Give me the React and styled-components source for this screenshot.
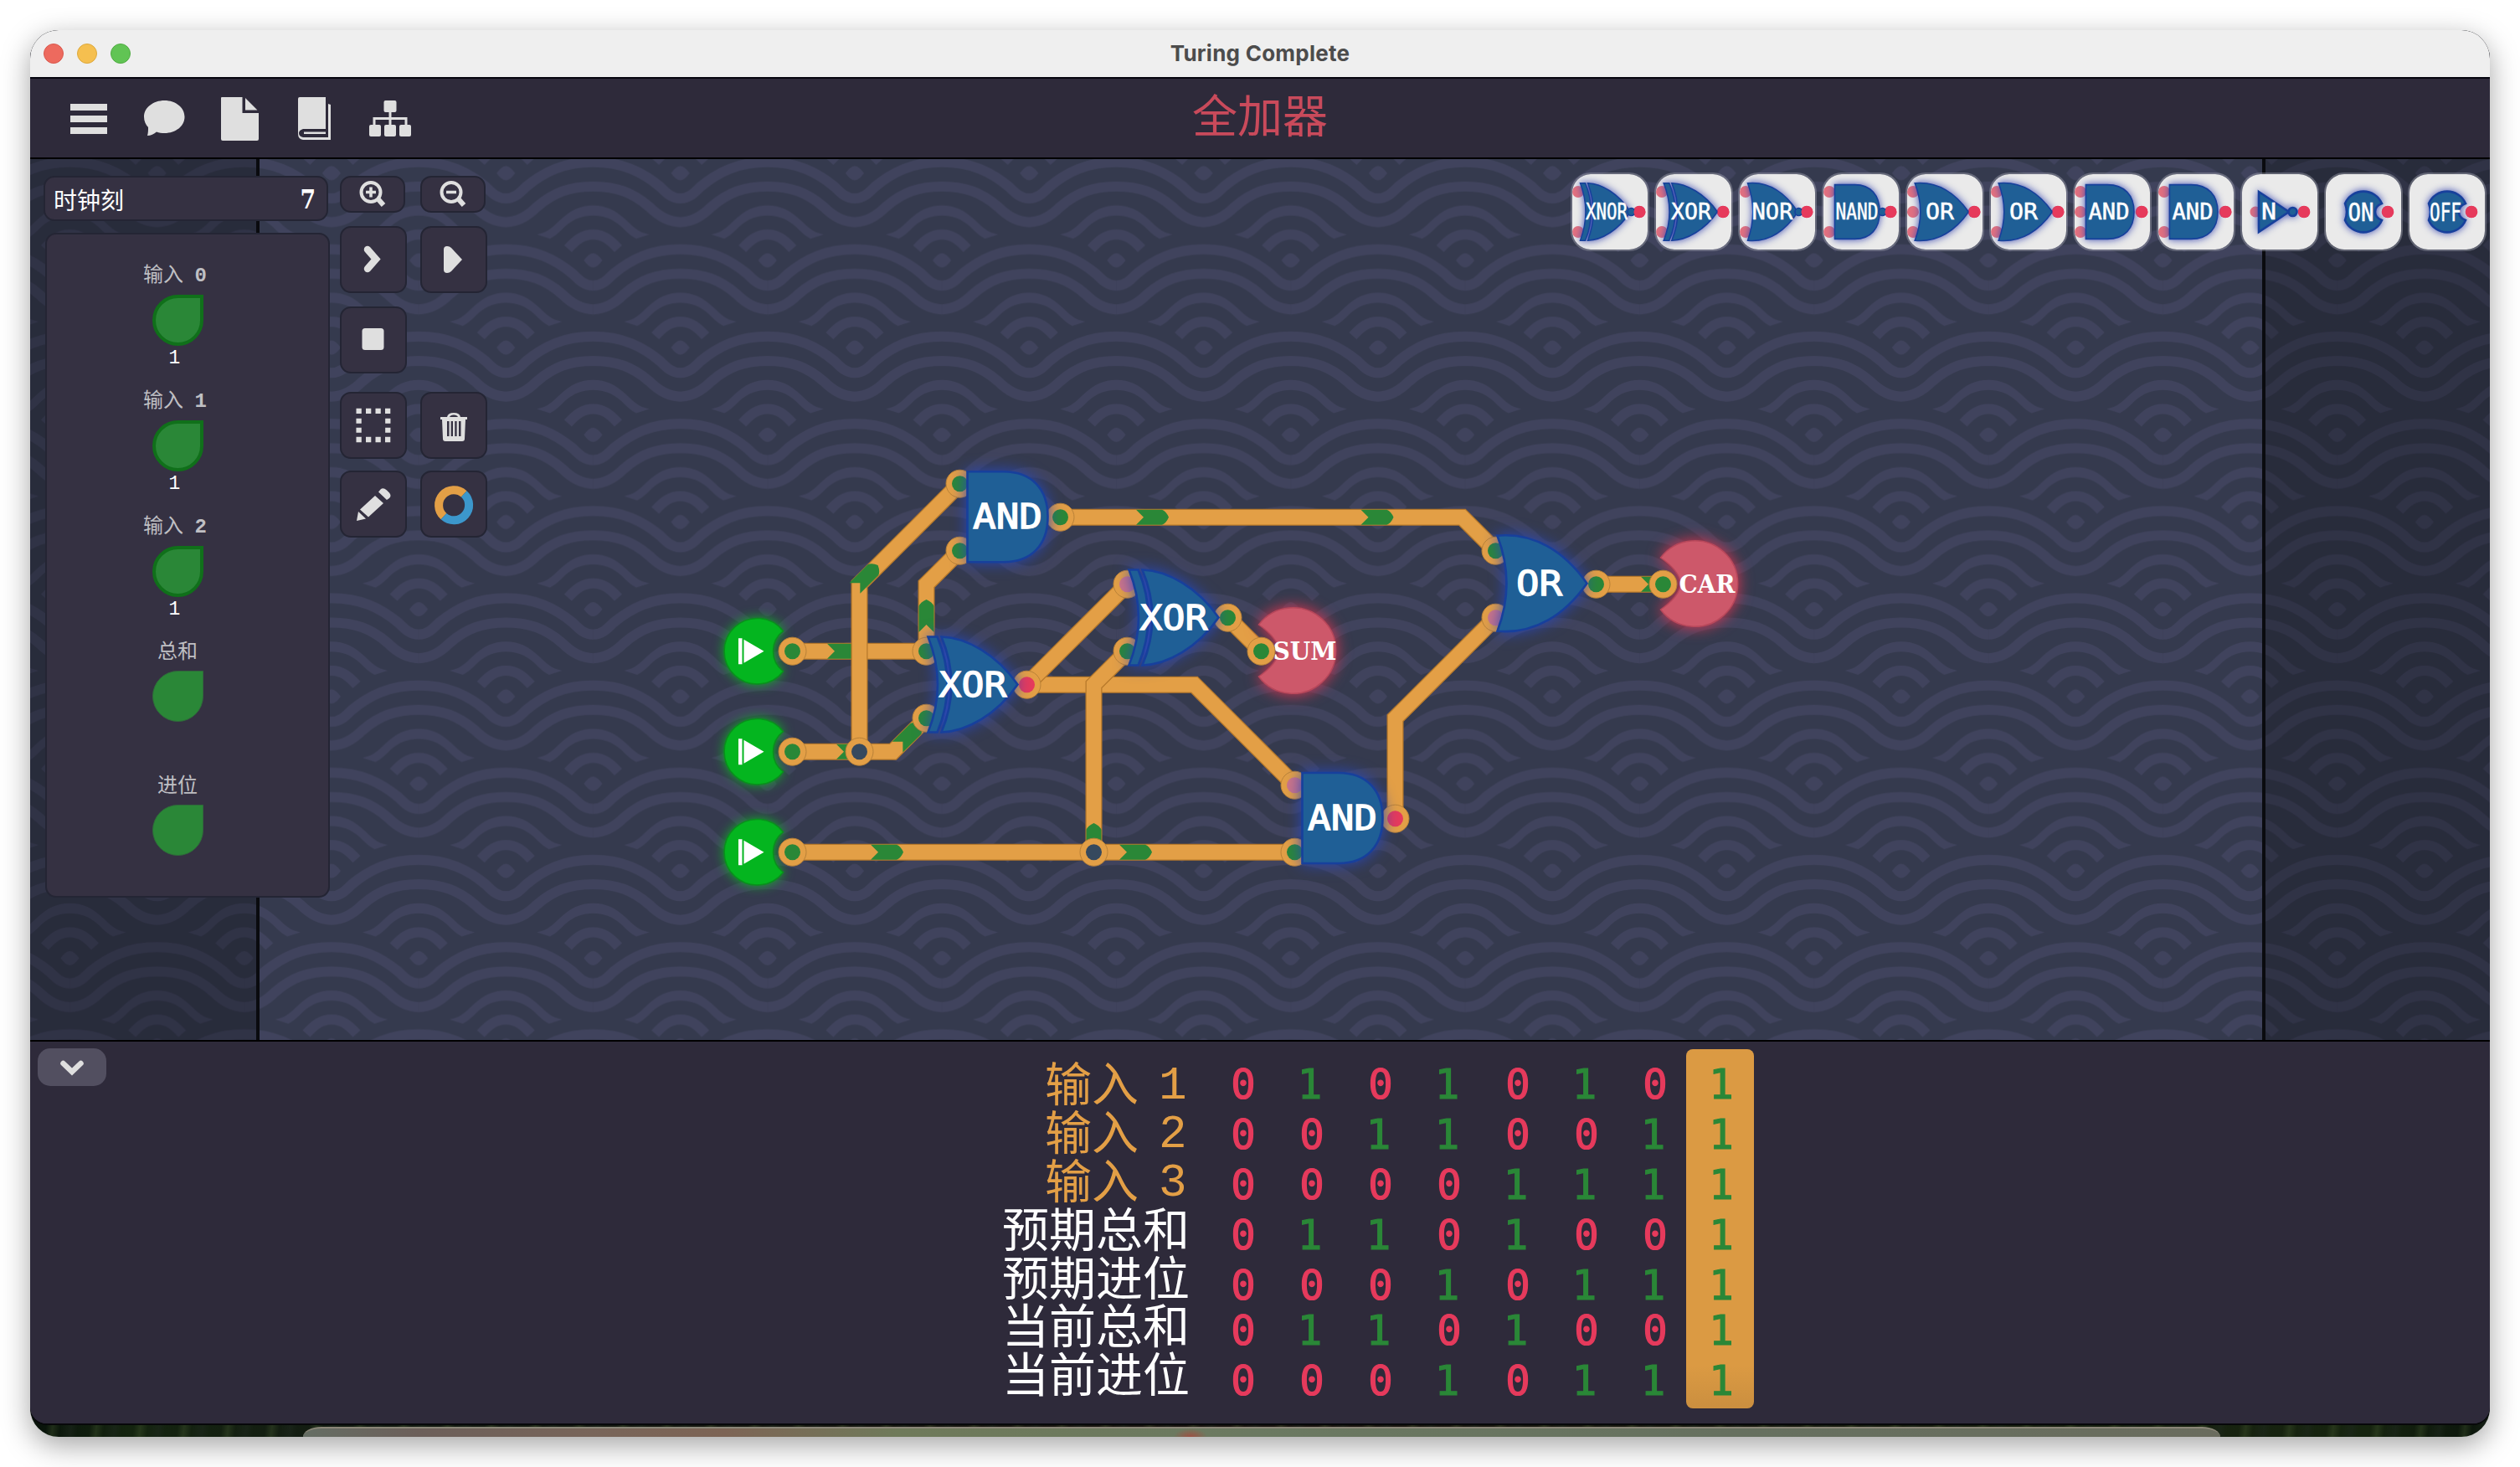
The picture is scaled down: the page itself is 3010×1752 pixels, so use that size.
import React from "react";
import styled, { createGlobalStyle, css } from "styled-components";

const CJK = `"Noto Sans CJK SC", sans-serif`;
const MONO = `"Liberation Mono", "Noto Sans CJK SC", monospace`;

const GlobalStyle = createGlobalStyle`
  * { box-sizing: border-box; }
  body { margin: 0; background: #ffffff; font-family: ${CJK}; }
  svg { display: block; }
`;

/* ---------- window ---------- */

const Page = styled.main`
  width: 3010px;
  height: 1752px;
  padding: 36px;
  overflow: hidden;
  background: #ffffff;
`;

const Screen = styled.div`
  display: flex;
  flex-direction: column;
  width: 2938px;
  height: 1680px;
  border-radius: 34px;
  overflow: hidden;
  background:
    repeating-linear-gradient(97deg, transparent 0 14px, rgba(70, 90, 50, 0.35) 22px, transparent 31px, rgba(30, 40, 30, 0.5) 44px, transparent 52px),
    linear-gradient(90deg, #08120a, #14240f 4%, #131c12 12%, #1b1410 50%, #16240f 95%, #0a140b);
`;

const Shadow = styled.div`
  border-radius: 34px;
  width: 2938px;
  box-shadow: 0 10px 34px rgba(0, 0, 0, 0.36);
`;

const GameWindow = styled.section`
  display: flex;
  flex-direction: column;
  height: 1664px;
  border-radius: 0 0 20px 20px;
  overflow: hidden;
  background: #2e2a3a;
  box-shadow: 0 2px 0 #07080a;
`;

const TitleBar = styled.header`
  display: grid;
  grid-template-columns: 1fr auto 1fr;
  align-items: center;
  height: 56px;
  padding: 0 16px;
  background: #efefef;
`;

const Lights = styled.div`
  display: flex;
  gap: 16px;
`;

const Light = styled.span`
  width: 24px;
  height: 24px;
  border-radius: 50%;
  background: ${(p) => p.$fill};
  border: 1px solid ${(p) => p.$edge};
`;

const WindowTitle = styled.h1`
  margin: 0;
  font: 700 26px/56px Inter, sans-serif;
  letter-spacing: 0.25px;
  color: #4c4c4c;
`;

const Menu = styled.nav`
  display: grid;
  grid-template-columns: 1fr auto 1fr;
  align-items: start;
  height: 98px;
  border-top: 2px solid #06060f;
  border-bottom: 2px solid #000000;
  background: #2e2a3a;
`;

const MenuIcons = styled.div`
  display: flex;
  padding: 20px 0 0 40px;
  gap: 30px;
  svg { width: 60px; height: 56px; fill: #dfdfdf; }
`;

const LevelTitle = styled.h2`
  margin: 0;
  font: 400 54px/84px ${CJK};
  color: #c94a5b;
`;

/* ---------- board ---------- */

const Board = styled.section`
  display: grid;
  height: 1052px;
  > * { grid-area: 1 / 1; }
`;

const Overlay = styled.div`
  display: flex;
  align-items: flex-start;
  padding: 16px 4px 0 16px;
`;

const SideColumn = styled.div`
  display: flex;
  flex-direction: column;
  width: 342px;
  padding-top: 4px;
`;

const panel = css`
  background: #353142;
  border: 2px solid #242534;
  border-radius: 13px;
`;

const TickBox = styled.div`
  ${panel}
  display: flex;
  align-items: center;
  justify-content: space-between;
  width: 340px;
  height: 54px;
  padding: 2px 12px 0 10px;
  color: #ffffff;
  font: 400 28px/48px ${CJK};
`;

const TickValue = styled.b`
  font: 700 31px/48px "DejaVu Serif", serif;
  transform: translateX(1px) scaleX(0.86);
`;

const StatePanel = styled.div`
  ${panel}
  display: flex;
  flex-direction: column;
  width: 340px;
  height: 794px;
  margin: 14px 0 0 2px;
  padding-top: 30px;
`;

const Signal = styled.div`
  display: flex;
  flex-direction: column;
  align-items: center;
  width: 312px;
  height: ${(p) => p.$height || 150}px;
`;

const SignalName = styled.span`
  height: ${(p) => (p.$numbered ? 42 : 41)}px;
  font: 400 24px/32px ${CJK};
  color: #bfbfc3;
  white-space: pre;
  transform: translateX(${(p) => (p.$numbered ? -3 : 0)}px);
  b { margin-left: 8px; font: 700 24px/32px ${MONO}; }
`;

const Leaf = styled.span`
  flex: none;
  width: 61px;
  height: 61px;
  border-radius: 50% 0 50% 50%;
  background: #2a8737;
  border: ${(p) => (p.$ringed ? "4px solid #10701a" : "1px solid #2f6a3a")};
`;

const SignalValue = styled.span`
  font: 400 23px/26px ${MONO};
  padding-right: 7px;
  padding-top: 2px;
  color: #ffffff;
`;

const ToolGrid = styled.div`
  display: grid;
  grid-template-columns: 80px 80px;
  column-gap: 16px;
  grid-template-rows: 60px 96px 102px 94px 80px;
  padding-top: 4px;
  margin-left: 12px;
`;

const ToolButton = styled.button`
  ${panel}
  display: flex;
  align-items: center;
  justify-content: center;
  width: ${(p) => (p.$short ? 78 : 80)}px;
  height: ${(p) => (p.$short ? 44 : 80)}px;
  padding: 0;
  svg { width: 60px; height: 60px; flex: none; }
`;

const PartsBar = styled.div`
  display: flex;
  gap: 6px;
  margin-left: auto;
`;

const PartTile = styled.button`
  width: 94px;
  height: 94px;
  padding: 0;
  border: 2px solid rgba(160, 162, 175, 0.45);
  border-radius: 24px;
  background: #eaeaea;
  background-clip: padding-box;
  overflow: hidden;
`;

/* ---------- truth table ---------- */

const TablePanel = styled.section`
  display: grid;
  grid-template-columns: 1385px 1fr;
  height: 458px;
  border-top: 2px solid #000000;
  background: #2e2a3a;
`;

const LabelArea = styled.div`
  display: flex;
  justify-content: space-between;
  align-items: flex-start;
  padding: 8px 0 0 9px;
`;

const CollapseButton = styled.button`
  display: flex;
  align-items: center;
  justify-content: center;
  width: 82px;
  height: 45px;
  padding: 0;
  border: 0;
  border-radius: 15px;
  background: #524f60;
`;

const Labels = styled.div`
  display: flex;
  flex-direction: column;
  align-items: flex-end;
  padding-top: 10px;
`;

const RowLabel = styled.span`
  display: flex;
  font: 400 56px/57.9px ${CJK};
  height: 57.9px;
  color: ${(p) => (p.$input ? "#e39f46" : "#ffffff")};
  white-space: pre;
`;

const RowIndex = styled.span`
  width: 61px;
  padding-left: 24px;
  margin-top: 7px;
  font: 400 56px/57px ${MONO};
`;

const Columns = styled.div`
  display: flex;
  padding: 9px 0 0 19px;
`;

const Column = styled.div`
  display: flex;
  flex-direction: column;
  align-items: center;
  width: ${(p) => (p.$current ? 81 : 82)}px;
  height: 429px;
  padding: 13px 0 0 8px;
  border-radius: 8px;
  background: ${(p) => (p.$current ? "linear-gradient(#db9a43 88%, #cb8f3f)" : "transparent")};
`;

const Bit = styled.span`
  height: 60px;
  font: 400 49px/60px "DejaVu Sans Mono", monospace;
  -webkit-text-stroke: 1.2px currentColor;
  color: ${(p) => (p.$on ? "#2a8737" : "#e63a5c")};
  padding-right: ${(p) => (p.$on ? 5 : 0)}px;
  &:nth-child(n + 6) { transform: translateY(-6px); }
`;

const Dock = styled.div`
  width: 2290px;
  height: 12px;
  margin: 4px 0 0 326px;
  border-radius: 22px 22px 0 0 / 12px 12px 0 0;
  border-top: 2px solid #8b8678;
  background:
    radial-gradient(20px 10px at 1060px 10px, rgba(170, 70, 60, 0.8), transparent),
    linear-gradient(90deg, #656e64, #6c5f5a 6%, #78655a 15%, #7d6455 22%, #6f7a5a 31%, #6b7961 50%, #66705f 75%, #6a6c5e);
`;

/* ---------- drawings ---------- */

const GateFace = styled.g`
  fill: #1f5f96;
  stroke: #17409c;
  stroke-width: 2.6;
  filter: drop-shadow(0 0 ${(p) => p.$glow || 9}px ${(p) => p.$tone || "#2847b8"});
`;

const GateText = styled.text`
  font: 400 ${(p) => p.$size || 41}px "DejaVu Sans Mono", monospace;
  fill: #ffffff;
  stroke: #ffffff;
  stroke-width: ${(p) => (p.$size ? 0.5 : 1.3)};
  text-anchor: middle;
`;

const OutputText = styled.text`
  font: 700 29px "DejaVu Serif", serif;
  fill: #ffffff;
`;

const AND_BODY = "M-51,-54 H-8 C26,-54 45,-33 45,0 C45,33 26,54 -8,54 H-51 Z";
const OR_BODY = "M-58,-57 C-14,-61 22,-38 49,0 C22,38 -14,61 -58,57 Q-36,0 -58,-57 Z";
const XOR_BODY = "M-42,-57 C-12,-56 24,-36 49,0 C24,36 -12,56 -42,57 Q-18,0 -42,-57 Z";
const XOR_BAR = "M-58,-57 H-47 Q-23,0 -47,57 H-58 Q-35,0 -58,-57 Z";

function GateShape({ kind, glow, tone }) {
  return (
    <GateFace $glow={glow} $tone={tone}>
      {kind === "AND" && <path d={AND_BODY} />}
      {kind === "OR" && <path d={OR_BODY} />}
      {kind === "XOR" && (
        <>
          <path d={XOR_BAR} />
          <path d={XOR_BODY} />
        </>
      )}
    </GateFace>
  );
}

function Gate({ kind, x, y, textX = 0, width }) {
  return (
    <g transform={`translate(${x} ${y})`}>
      <GateShape kind={kind} />
      <GateText x={textX} y={14} textLength={width} lengthAdjust="spacingAndGlyphs">
        {kind}
      </GateText>
    </g>
  );
}

const PIN_FILL = { on: "#2a8737", off: "#e63a5c", soft: "#cc7488", node: "#36495e" };

function Pin({ x, y, state = "on" }) {
  return (
    <g>
      <circle cx={x} cy={y} r="16.5" fill="#e39f46" stroke="#b98238" strokeWidth="1" />
      <circle cx={x} cy={y} r="9.5" fill={PIN_FILL[state]} />
    </g>
  );
}

function Wire({ d }) {
  return (
    <g fill="none" strokeMiterlimit="6">
      <path d={d} stroke="#b87a2b" strokeWidth="20" />
      <path d={d} stroke="#e39f46" strokeWidth="17.4" />
    </g>
  );
}

function Pulse({ x, y, turn = 0 }) {
  return (
    <path
      transform={`translate(${x} ${y}) rotate(${turn})`}
      d="M0,-9 H31 Q36,-7 39,0 Q36,7 31,9 H0 L9,0 Z"
      fill="#2a8737"
    />
  );
}

const InputDisc = styled.path`
  fill: #04b51f;
  stroke: #0a8f1d;
  stroke-width: 1.5;
  filter: drop-shadow(0 0 7px #0fae28);
`;

const OutputDisc = styled.path`
  fill: #cd586a;
  stroke: #b8485b;
  stroke-width: 1.5;
  filter: drop-shadow(0 0 9px #e03550);
`;

function InputNode({ y }) {
  return (
    <g transform={`translate(904 ${y})`}>
      <InputDisc d="M31.5,-24 A39.3,39.3 0 1 0 31.5,24 A30,30 0 0 1 31.5,-24 Z" />
      <path d="M-22,-15.5 h4.5 v31 h-4.5 Z M-15.5,-14 L8.5,0 L-15.5,14 Z" fill="#ffffff" />
    </g>
  );
}

function OutputNode({ x, y, name }) {
  return (
    <g transform={`translate(${x} ${y})`}>
      <OutputDisc d="M-41,-31 A51.3,51.3 0 1 1 -41,31 Q-18,15 -17,0 Q-18,-15 -41,-31 Z" />
      <OutputText x={name === "SUM" ? -24 : -19} y={10.7} textLength={name === "SUM" ? 76 : 67} lengthAdjust="spacingAndGlyphs">
        {name}
      </OutputText>
    </g>
  );
}

function WaveTile({ x, y }) {
  return (
    <g transform={`translate(${x} ${y})`}>
      <path d="M-104.17,-74 C-94,-74 -88,-80 -80,-88 C-58,-106 -35,-117.3 0,-117.3 C35,-117.3 58,-106 80,-88 C88,-80 94,-74 104.17,-74" />
      <path d="M-104.17,-45.7 C-90,-45.7 -79,-52 -67,-64 C-47,-81 -28,-88.3 0,-88.3 C28,-88.3 47,-81 67,-64 C79,-52 90,-45.7 104.17,-45.7" />
      <path
        d="M-67,-31 C-54,-33 -48,-40 -40,-47.5 C-27,-60 -15,-65.5 0,-65.5 C15,-65.5 27,-60 40,-47.5 C48,-40 54,-33 67,-31 L51.5,-26 C46,-28 40,-34 34,-40 C23,-50 12,-53.5 0,-53.5 C-12,-53.5 -23,-50 -34,-40 C-40,-34 -46,-28 -51.5,-26 Z"
        fill="#40435d"
        stroke="none"
      />
      <path d="M-30,-14 C-20,-25 -12,-31 0,-31 C12,-31 20,-25 30,-14" />
      <path d="M-11,0 Q-5,-8.5 0,-8.5 Q5,-8.5 11,0 Q5,8.5 0,8.5 Q-5,8.5 -11,0 Z" fill="#40435d" stroke="none" />
    </g>
  );
}

const T = 208.33;

function Circuit() {
  return (
    <svg width="2938" height="1052" viewBox="36 190 2938 1052">
      <defs>
        <pattern id="waves" x="812.6" y="206.8" width={T} height={T} patternUnits="userSpaceOnUse">
          <rect width={T} height={T} fill="#353a4e" />
          <g fill="none" stroke="#40435d" strokeWidth="12">
            {[-1, 0, 1, 2].map((i) =>
              [-1, 0, 1, 2].map((j) => (
                <React.Fragment key={`${i}${j}`}>
                  <WaveTile x={i * T} y={j * T} />
                  <WaveTile x={i * T + T / 2} y={j * T - T / 2} />
                </React.Fragment>
              ))
            )}
          </g>
        </pattern>
      </defs>
      <rect x="36" y="190" width="2938" height="1052" fill="url(#waves)" />
      <rect x="36" y="190" width="270" height="1052" fill="#000000" opacity="0.24" />
      <rect x="2705" y="190" width="269" height="1052" fill="#000000" opacity="0.24" />
      <rect x="306" y="190" width="4" height="1052" fill="#0a0b0f" />
      <rect x="2702" y="190" width="4" height="1052" fill="#0a0b0f" />

      <Wire d="M946.5,777.7 H1106.5" />
      <Pulse x={988} y={777.7} />
      <Wire d="M1106.5,777.7 V697.7 L1146.5,657.7" />
      <Pulse x={1106.5} y={755} turn={-90} />
      <Wire d="M946.5,897.7 H1066.5 L1106.5,857.7" />
      <Pulse x={999} y={897.7} />
      <Pulse x={1072} y={892.2} turn={-45} />
      <Wire d="M1026.5,897.7 V697.7 L1146.5,577.7" />
      <Pulse x={1021} y={702.5} turn={-45} />
      <Wire d="M1266.5,617.7 H1746.5 L1786.5,657.7" />
      <Pulse x={1357} y={617.7} />
      <Pulse x={1625.5} y={617.7} />
      <Wire d="M1226.5,817.7 H1426.5 L1546.5,937.7" />
      <Wire d="M1226.5,817.7 L1346.5,697.7" />
      <Wire d="M946.5,1017.7 H1546.5" />
      <Pulse x={1040} y={1017.7} />
      <Pulse x={1337} y={1017.7} />
      <Wire d="M1306.5,1017.7 V817.7 L1346.5,777.7" />
      <Pulse x={1306.5} y={1022} turn={-90} />
      <Wire d="M1666.5,977.7 V857.7 L1786.5,737.7" />
      <Wire d="M1466.5,737.7 L1506.5,777.7" />
      <Wire d="M1906.5,697.7 H1986.5" />
      <Pulse x={1960} y={697.7} />

      <InputNode y={777.7} />
      <InputNode y={897.7} />
      <InputNode y={1017.7} />
      <Pin x={946.5} y={777.7} />
      <Pin x={946.5} y={897.7} />
      <Pin x={946.5} y={1017.7} />
      <Pin x={1026.5} y={897.7} state="node" />
      <Pin x={1306.5} y={1017.7} state="node" />
      <Pin x={1146.5} y={577.7} />
      <Pin x={1146.5} y={657.7} />
      <Pin x={1266.5} y={617.7} />
      <Pin x={1106.5} y={777.7} />
      <Pin x={1106.5} y={857.7} />
      <Pin x={1226.5} y={817.7} state="off" />
      <Pin x={1346.5} y={697.7} state="soft" />
      <Pin x={1346.5} y={777.7} />
      <Pin x={1466.5} y={737.7} />
      <Pin x={1546.5} y={937.7} state="soft" />
      <Pin x={1546.5} y={1017.7} />
      <Pin x={1666.5} y={977.7} state="off" />
      <Pin x={1786.5} y={657.7} />
      <Pin x={1786.5} y={737.7} state="soft" />
      <Pin x={1906.5} y={697.7} />

      <Gate kind="AND" x={1206.5} y={617.2} textX={-3} width={83} />
      <Gate kind="XOR" x={1166.5} y={817.5} textX={-4.5} width={81} />
      <Gate kind="XOR" x={1406.5} y={737.5} textX={-4.5} width={81} />
      <Gate kind="AND" x={1606.5} y={977} textX={-3} width={83} />
      <Gate kind="OR" x={1846.5} y={696.7} textX={-8} width={55} />
      <OutputNode x={1544.5} y={777} name="SUM" />
      <OutputNode x={2024.5} y={697} name="CAR" />
      <Pin x={1506.5} y={777.7} />
      <Pin x={1986.5} y={697.7} />
    </svg>
  );
}

const PARTS = [
  { label: "XNOR", kind: "XOR", pins: 2, negated: true, width: 50, tx: -4 },
  { label: "XOR", kind: "XOR", pins: 2, width: 48, tx: -3 },
  { label: "NOR", kind: "OR", pins: 2, negated: true, width: 49, tx: -6 },
  { label: "NAND", kind: "AND", pins: 2, negated: true, width: 51, tx: -5 },
  { label: "OR", kind: "OR", pins: 3, width: 34, tx: -6 },
  { label: "OR", kind: "OR", pins: 2, width: 34, tx: -6 },
  { label: "AND", kind: "AND", pins: 3, width: 49, tx: -4 },
  { label: "AND", kind: "AND", pins: 2, width: 49, tx: -4 },
  { label: "N", kind: "NOT", width: 18, tx: -13 },
  { label: "ON", kind: "CONST", width: 31, tx: -3 },
  { label: "OFF", kind: "CONST", width: 38, tx: -2 },
];

function Part({ part }) {
  const { label, kind, pins, negated, width, tx } = part;
  const rows = pins === 3 ? [-24, 0, 24] : [-24, 24];
  return (
    <PartTile>
      <svg width="90" height="90" viewBox="-45 -45 90 90">
        {pins && rows.map((r) => <circle key={r} cx="-38" cy={r} r="7" fill="#e2707f" />)}
        {kind === "NOT" && <circle cx="-29" cy="0" r="6.5" fill="#e2707f" />}
        <circle cx={pins ? 35 : 29} cy="0" r="7.3" fill="#e63a5c" />
        {pins && (
          <g transform={`translate(${negated ? -3 : -1} 0) scale(${negated ? 0.56 : 0.6} 0.6)`}>
            <GateShape kind={kind} glow={8} tone="#3c4ab0" />
          </g>
        )}
        {negated && <circle cx="25.5" cy="0" r="4.5" fill="#1f5f96" stroke="#17409c" strokeWidth="1.6" />}
        {kind === "NOT" && (
          <GateFace $glow={5} $tone="#3c4ab0" strokeWidth="1.6">
            <path d="M-25,-24 L11,0 L-25,24 Z" />
            <circle cx="15.5" cy="0" r="5" />
          </GateFace>
        )}
        {kind === "CONST" && (
          <GateFace $glow={5} $tone="#3c4ab0">
            <path d="M-22,-10 A24,24 0 0 1 22,-10 Q14,-7 14,0 Q14,7 22,10 A24,24 0 0 1 -22,10 Q-18,0 -22,-10 Z" />
          </GateFace>
        )}
        <circle cx={pins ? 35.5 : 29} cy="0" r="7" fill="#e63a5c" />
        <GateText $size={kind === "CONST" ? 30 : 27} x={tx} y={kind === "CONST" ? 11 : 9} textLength={width} lengthAdjust="spacingAndGlyphs">
          {label}
        </GateText>
      </svg>
    </PartTile>
  );
}

const MagnifierIcon = ({ plus }) => (
  <svg viewBox="0 0 60 60" fill="none" stroke="#dfdfdf" strokeWidth="4">
    <circle cx="28" cy="27.5" r="11.5" />
    <path d="M36,35 L43,43" strokeWidth="6" />
    <path d={plus ? "M22,27.5 H34 M28,21.5 V33.5" : "M22,27.5 H34"} strokeWidth="3.6" />
  </svg>
);

const WideCell = styled.div`
  grid-column: 1 / span 2;
`;

const SIGNALS = [
  { name: "输入 ", index: "0", value: "1" },
  { name: "输入 ", index: "1", value: "1" },
  { name: "输入 ", index: "2", value: "1" },
  { name: "总和", height: 160 },
  { name: "进位" },
];

const ROWS = [
  { label: "输入", index: "1", bits: "01010101" },
  { label: "输入", index: "2", bits: "00110011" },
  { label: "输入", index: "3", bits: "00001111" },
  { label: "预期总和", bits: "01101001" },
  { label: "预期进位", bits: "00010111" },
  { label: "当前总和", bits: "01101001" },
  { label: "当前进位", bits: "00010111" },
];

export default function App() {
  return (
    <Page>
      <GlobalStyle />
      <Shadow>
        <Screen>
          <GameWindow>
            <TitleBar>
              <Lights>
                <Light $fill="#ed6a5e" $edge="#d9584d" />
                <Light $fill="#f5bf4f" $edge="#dca83c" />
                <Light $fill="#61c454" $edge="#50ac43" />
              </Lights>
              <WindowTitle>Turing Complete</WindowTitle>
            </TitleBar>

            <Menu>
              <MenuIcons>
                <svg viewBox="0 0 60 56">
                  <path d="M8,10 h44 v8 h-44 Z M8,24 h44 v8 h-44 Z M8,38 h44 v8 h-44 Z" />
                </svg>
                <svg viewBox="0 0 60 56">
                  <path d="M30.5,6 C44,6 54.5,14.5 54.5,25.5 C54.5,36.5 44,45 30.5,45 C27,45 24,44.5 21,43.5 C18,46 14,48 10,48 C11,45 11,41 11,38 C8,35 6,30.5 6,25.5 C6,14.5 17,6 30.5,6 Z" />
                </svg>
                <svg viewBox="0 0 60 56">
                  <path d="M10,2 h25 v19 h19.5 v31 a2,2 0 0 1 -2,2 h-41 a2,2 0 0 1 -2,-2 v-49 Z M38.5,3 L53,17.5 H38.5 Z" transform="translate(-1.5 0)" />
                </svg>
                <svg viewBox="0 0 60 56">
                  <path d="M12,4 q0,-2 2,-2 h31 v38 h-27 q-5,1.5 -5,5 q0,4 5,5 h30 v-40 l3,1 v42 h-33 q-6,-1 -6,-7 Z M19,43.5 h26 v2.5 h-26 Z" transform="translate(-2 0)" />
                </svg>
                <svg viewBox="0 0 60 56">
                  <rect x="22.5" y="6" width="15" height="14" rx="2" />
                  <path d="M28.5,18 h3 v8 h19 v10 h-3 v-7 h-16 v7 h-3 v-7 h-16 v7 h-3 v-10 h19 Z" />
                  <rect x="5" y="35" width="14" height="14" rx="2" />
                  <rect x="23" y="35" width="14" height="14" rx="2" />
                  <rect x="41" y="35" width="14" height="14" rx="2" />
                </svg>
              </MenuIcons>
              <LevelTitle>全加器</LevelTitle>
            </Menu>

            <Board>
              <Circuit />
              <Overlay>
                <SideColumn>
                  <TickBox>
                    时钟刻<TickValue>7</TickValue>
                  </TickBox>
                  <StatePanel>
                    {SIGNALS.map((s, i) => (
                      <Signal key={i} $height={s.height}>
                        <SignalName $numbered={!!s.index}>
                          {s.name}
                          {s.index && <b>{s.index}</b>}
                        </SignalName>
                        <Leaf $ringed={!!s.value} />
                        {s.value && <SignalValue>{s.value}</SignalValue>}
                      </Signal>
                    ))}
                  </StatePanel>
                </SideColumn>

                <ToolGrid>
                  <ToolButton $short><MagnifierIcon plus /></ToolButton>
                  <ToolButton $short><MagnifierIcon /></ToolButton>
                  <ToolButton>
                    <svg viewBox="0 0 60 60" fill="none" stroke="#dfdfdf" strokeWidth="8.5" strokeLinecap="round">
                      <path d="M22,18 L32,29.5 L22,41" transform="translate(1 0)" />
                    </svg>
                  </ToolButton>
                  <ToolButton>
                    <svg viewBox="0 0 60 60" fill="#dfdfdf">
                      <path d="M18,18 Q18,14 22,14 Q25,14 27,16 L40,30 L27,44 Q25,46 22,46 Q18,46 18,42 Z" />
                    </svg>
                  </ToolButton>
                  <WideCell>
                    <ToolButton>
                      <svg viewBox="0 0 60 60" fill="#dfdfdf">
                        <rect x="16.5" y="16" width="26" height="26" rx="3.5" />
                      </svg>
                    </ToolButton>
                  </WideCell>
                  <ToolButton>
                    <svg viewBox="0 0 60 60" fill="none" stroke="#dfdfdf" strokeWidth="6.3">
                      <path d="M9.5,12.8 h41 M9.5,47 h41" strokeDasharray="6.3 5.2" />
                      <path d="M12.6,21.7 v19 M47.3,21.7 v19" strokeDasharray="6 5" />
                    </svg>
                  </ToolButton>
                  <ToolButton>
                    <svg viewBox="0 0 60 60" fill="#dfdfdf">
                      <path d="M14,20 h8 q1,-5 8,-5 q7,0 8,5 h8 v3 h-2 l-1,23 q0,3 -3,3 h-20 q-3,0 -3,-3 l-1,-23 h-2 Z" />
                      <path d="M25,20 q1,-2.5 5,-2.5 q4,0 5,2.5 Z M22,25 h2.5 v18 h-2.5 Z M26.7,25 h2.3 v18 h-2.3 Z M31.3,25 h2.3 v18 h-2.3 Z M36,25 h2.5 v18 h-2.5 Z" fill="#353142" />
                    </svg>
                  </ToolButton>
                  <ToolButton>
                    <svg viewBox="0 0 60 60" fill="#dfdfdf">
                      <path d="M10,50 L12,39 L21,47.5 Z M14,36.5 L32,20 L42,29 L24,45.5 Z M36,15.5 L39,12 Q42,10 46,13.5 L49,16.5 Q52,20 49,23 L46,25 Z" />
                    </svg>
                  </ToolButton>
                  <ToolButton>
                    <svg viewBox="0 0 60 60" fill="none" strokeWidth="10">
                      <path d="M18,44.6 A18,18 0 0 1 42.2,17.9" stroke="#e39f46" />
                      <path d="M42.2,17.9 A18,18 0 0 1 18,44.6" stroke="#3c97cc" />
                    </svg>
                  </ToolButton>
                </ToolGrid>

                <PartsBar>
                  {PARTS.map((part, i) => (
                    <Part key={i} part={part} />
                  ))}
                </PartsBar>
              </Overlay>
            </Board>

            <TablePanel>
              <LabelArea>
                <CollapseButton>
                  <svg width="40" height="30" viewBox="0 0 40 30" fill="none" stroke="#dfdfdf" strokeWidth="6.5" strokeLinecap="round">
                    <path d="M9.5,10 L20,20 L30.5,10" />
                  </svg>
                </CollapseButton>
                <Labels>
                  {ROWS.map((row, i) => (
                    <RowLabel key={i} $input={!!row.index}>
                      {row.label}
                      {row.index && <RowIndex>{row.index}</RowIndex>}
                    </RowLabel>
                  ))}
                </Labels>
              </LabelArea>
              <Columns>
                {Array.from({ length: 8 }, (_, c) => (
                  <Column key={c} $current={c === 7}>
                    {ROWS.map((row, r) => (
                      <Bit key={r} $on={row.bits[c] === "1"}>
                        {row.bits[c]}
                      </Bit>
                    ))}
                  </Column>
                ))}
              </Columns>
            </TablePanel>
          </GameWindow>
          <Dock />
        </Screen>
      </Shadow>
    </Page>
  );
}
